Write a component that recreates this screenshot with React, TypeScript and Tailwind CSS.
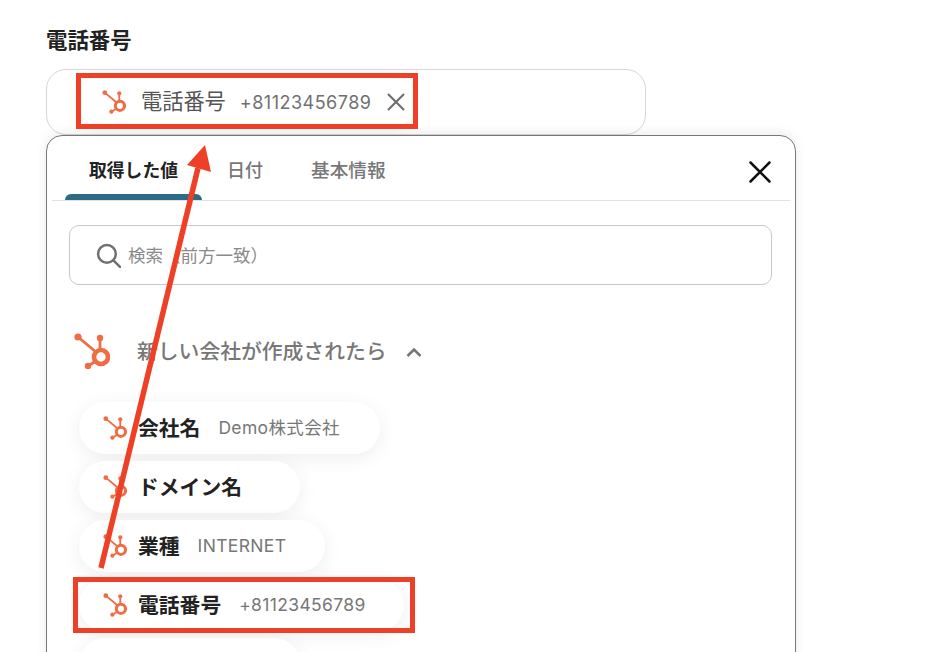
const HubspotIcon = ({ className }: { className: string }) => {
    return (
        <svg viewBox="0 0 36 38" className={className} fill="none">
            <g stroke="#ef6c45">
                <path d="M4 4 L22 19" strokeWidth="2.8" />
                <path d="M26 6 V18" strokeWidth="2.8" />
                <path d="M14 33 L22 28" strokeWidth="2.8" />
                <circle cx="27" cy="24" r="7" strokeWidth="4.6" />
            </g>
            <g fill="#ef6c45">
                <circle cx="4" cy="4" r="3.6" />
                <circle cx="26" cy="5" r="3.2" />
                <circle cx="14" cy="33" r="3.2" />
            </g>
        </svg>
    );
};

const chips = [
    { name: "会社名", value: "Demo株式会社", width: "w-[301px]" },
    { name: "ドメイン名", value: "", width: "w-[221px]" },
    { name: "業種", value: "INTERNET", width: "w-[246px]" },
    { name: "電話番号", value: "+81123456789", width: "w-[325px]" },
    { name: "", value: "", width: "w-[221px]" },
];

const App = () => {
    return (
        <div className="relative h-[652px] w-[948px] overflow-hidden bg-white pl-[46px] pt-[26px] font-['Inter','Noto_Sans_CJK_JP',sans-serif] text-[#222]">
            <h2 className="h-[28px] text-[21.4px] font-semibold leading-[28px]">電話番号</h2>

            <div className="mt-[15px] flex h-[66px] w-[600px] items-center rounded-[20px] border border-[#d6d6d6] pl-[31px]">
                <div className="flex h-[52px] w-[338px] items-center rounded-full bg-white pl-[24px] shadow-[0_2px_16px_rgba(0,0,0,0.06)]">
                    <HubspotIcon className="h-[25px] w-[24px]" />
                    <span className="ml-[15px] text-[21.2px] text-[#555]">電話番号</span>
                    <span className="ml-[14px] text-[18px] tracking-[0.5px] text-[#707070]">+81123456789</span>
                    <svg viewBox="0 0 20 20" className="ml-[14px] h-[20px] w-[20px]" stroke="#707070" strokeWidth="2.2">
                        <path d="M2 2 L18 18 M18 2 L2 18" />
                    </svg>
                </div>
            </div>

            <div className="h-[560px] w-[750px] rounded-t-[16px] border border-[#777] bg-white px-[5px] shadow-[0_-2px_12px_rgba(0,0,0,0.08)]">
                <div className="relative flex h-[65px] items-start border-b border-[#e2e2e2] pl-[13px]">
                    <div className="flex h-[64px] w-[137px] flex-col items-center justify-between">
                        <span className="pt-[22px] text-[17.8px] font-semibold leading-[26px]">取得した値</span>
                        <span className="h-[6px] w-full rounded-t-[6px] bg-[#2d6a85]" />
                    </div>
                    <span className="ml-[25px] pt-[22px] text-[18px] font-medium leading-[26px] text-[#777]">日付</span>
                    <span className="ml-[48px] pt-[22px] text-[18.7px] font-medium leading-[26px] text-[#777]">基本情報</span>
                    <svg viewBox="0 0 22 22" className="absolute right-[19px] top-[25px] h-[22px] w-[22px]" stroke="#111" strokeWidth="2.5" strokeLinecap="round">
                        <path d="M1.5 1.5 L20.5 20.5 M20.5 1.5 L1.5 20.5" />
                    </svg>
                </div>

                <div className="ml-[17px] mt-[24px] flex h-[60px] w-[703px] items-center rounded-[10px] border border-[#c8c8c8] pl-[26px]">
                    <svg viewBox="0 0 24 24" className="h-[25px] w-[25px]" fill="none" stroke="#707070" strokeWidth="2.4" strokeLinecap="round">
                        <circle cx="10.5" cy="10.5" r="8.5" />
                        <path d="M17 17 L23 23" />
                    </svg>
                    <span className="ml-[7px] pt-[2px] text-[17.5px] text-[#8a8a8a]">検索（前方一致）</span>
                </div>

                <div className="ml-[22px] mt-[48px] flex h-[38px] items-center">
                    <HubspotIcon className="h-[38px] w-[36px]" />
                    <span className="ml-[27px] text-[20.8px] font-medium text-[#777]">新しい会社が作成されたら</span>
                    <svg viewBox="0 0 16 10" className="ml-[19px] h-[10px] w-[16px]" fill="none" stroke="#777" strokeWidth="2.6">
                        <path d="M1.5 9 L8 2.5 L14.5 9" />
                    </svg>
                </div>

                <div className="ml-[27px] mt-[31px] flex flex-col gap-[7px]">
                    {chips.map((chip, i) => (
                        <div key={i} className={`flex h-[52px] shrink-0 items-center rounded-full bg-white pl-[24px] shadow-[0_4px_20px_rgba(0,0,0,0.07)] ${chip.width}`}>
                            {chip.name && <HubspotIcon className="h-[25px] w-[24px]" />}
                            <span className="ml-[11px] pt-[1px] text-[20.8px] font-semibold">{chip.name}</span>
                            {chip.value && <span className="ml-[18px] pt-[1px] text-[17.5px] tracking-[0.35px] text-[#777]">{chip.value}</span>}
                        </div>
                    ))}
                </div>
            </div>

            {/* 赤枠と矢印 */}
            <div className="absolute left-[76px] top-[73px] h-[56px] w-[342px] border-[5px] border-[#ee4027]" />
            <div className="absolute left-[73px] top-[577px] h-[56px] w-[342px] border-[5px] border-[#ee4027]" />
            <svg className="absolute left-0 top-0 h-[652px] w-[948px]" viewBox="0 0 948 652" fill="#ee4027">
                <path d="M101 568 L198 168" stroke="#ee4027" strokeWidth="5.5" />
                <path d="M205 145 L187 165 L211 172 Z" />
            </svg>
        </div>
    );
};

export default App;
